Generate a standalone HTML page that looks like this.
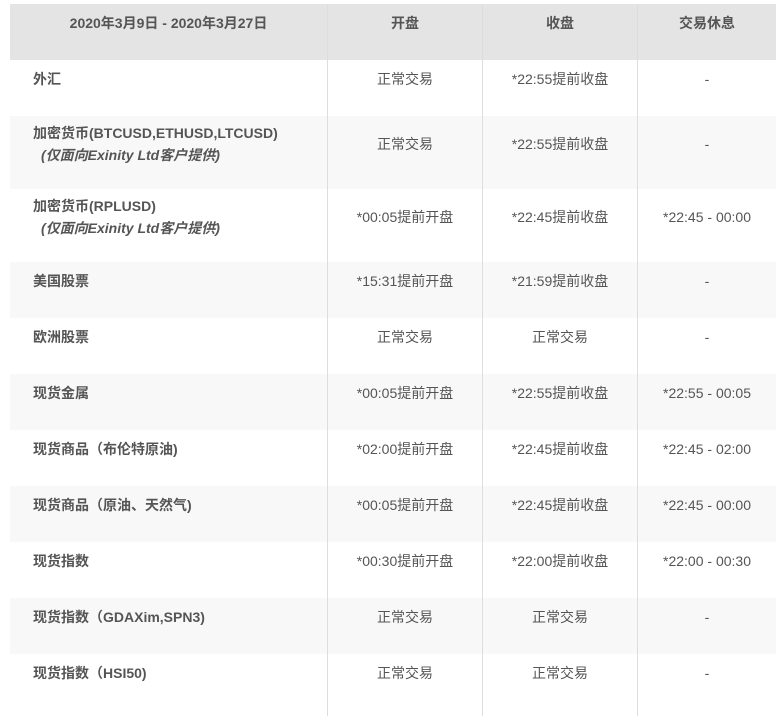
<!DOCTYPE html>
<html><head><meta charset="utf-8"><style>
body{margin:0;width:784px;height:716px;background:#fff;position:relative;overflow:hidden;font-family:"Liberation Sans","Noto Sans CJK SC",sans-serif;font-size:14px;color:#555}
.r{position:absolute;left:10px;width:766px}
.g{background:#f8f8f8}
.h{background:#e4e4e4;top:4px;height:56px}
.v{position:absolute;top:4px;height:712px;width:1px;background:#ddd}
.t{position:absolute;line-height:22px;white-space:nowrap}
.c1{left:33px;font-weight:bold}
.c{text-align:center}
.c2{left:328px;width:154px}
.c3{left:483px;width:154px}
.c4{left:638px;width:138px}
.hd{font-weight:bold;text-align:center}
i{font-weight:bold;padding-left:8px}
</style></head><body>
<div class="r h"></div>
<div class="r g" style="top:116px;height:73px"></div>
<div class="r g" style="top:262px;height:56px"></div>
<div class="r g" style="top:374px;height:56px"></div>
<div class="r g" style="top:486px;height:56px"></div>
<div class="r g" style="top:598px;height:56px"></div>
<div class="v" style="left:327px"></div>
<div class="v" style="left:482px"></div>
<div class="v" style="left:637px"></div>

<div class="t hd" style="top:12px;left:10px;width:317px">2020年3月9日 - 2020年3月27日</div>
<div class="t hd c2" style="top:12px">开盘</div>
<div class="t hd c3" style="top:12px">收盘</div>
<div class="t hd c4" style="top:12px">交易休息</div>

<div class="t c1" style="top:68px">外汇</div>
<div class="t c c2" style="top:68px">正常交易</div>
<div class="t c c3" style="top:68px">*22:55提前收盘</div>
<div class="t c c4" style="top:68px">-</div>

<div class="t c1" style="top:122px">加密货币(BTCUSD,ETHUSD,LTCUSD)<br><i>(仅面向Exinity Ltd客户提供)</i></div>
<div class="t c c2" style="top:133px">正常交易</div>
<div class="t c c3" style="top:133px">*22:55提前收盘</div>
<div class="t c c4" style="top:133px">-</div>

<div class="t c1" style="top:195px">加密货币(RPLUSD)<br><i>(仅面向Exinity Ltd客户提供)</i></div>
<div class="t c c2" style="top:206px">*00:05提前开盘</div>
<div class="t c c3" style="top:206px">*22:45提前收盘</div>
<div class="t c c4" style="top:206px">*22:45 - 00:00</div>

<div class="t c1" style="top:270px">美国股票</div>
<div class="t c c2" style="top:270px">*15:31提前开盘</div>
<div class="t c c3" style="top:270px">*21:59提前收盘</div>
<div class="t c c4" style="top:270px">-</div>

<div class="t c1" style="top:326px">欧洲股票</div>
<div class="t c c2" style="top:326px">正常交易</div>
<div class="t c c3" style="top:326px">正常交易</div>
<div class="t c c4" style="top:326px">-</div>

<div class="t c1" style="top:382px">现货金属</div>
<div class="t c c2" style="top:382px">*00:05提前开盘</div>
<div class="t c c3" style="top:382px">*22:55提前收盘</div>
<div class="t c c4" style="top:382px">*22:55 - 00:05</div>

<div class="t c1" style="top:438px">现货商品（布伦特原油)</div>
<div class="t c c2" style="top:438px">*02:00提前开盘</div>
<div class="t c c3" style="top:438px">*22:45提前收盘</div>
<div class="t c c4" style="top:438px">*22:45 - 02:00</div>

<div class="t c1" style="top:494px">现货商品（原油、天然气)</div>
<div class="t c c2" style="top:494px">*00:05提前开盘</div>
<div class="t c c3" style="top:494px">*22:45提前收盘</div>
<div class="t c c4" style="top:494px">*22:45 - 00:00</div>

<div class="t c1" style="top:550px">现货指数</div>
<div class="t c c2" style="top:550px">*00:30提前开盘</div>
<div class="t c c3" style="top:550px">*22:00提前收盘</div>
<div class="t c c4" style="top:550px">*22:00 - 00:30</div>

<div class="t c1" style="top:606px">现货指数（GDAXim,SPN3)</div>
<div class="t c c2" style="top:606px">正常交易</div>
<div class="t c c3" style="top:606px">正常交易</div>
<div class="t c c4" style="top:606px">-</div>

<div class="t c1" style="top:662px">现货指数（HSI50)</div>
<div class="t c c2" style="top:662px">正常交易</div>
<div class="t c c3" style="top:662px">正常交易</div>
<div class="t c c4" style="top:662px">-</div>
</body></html>
